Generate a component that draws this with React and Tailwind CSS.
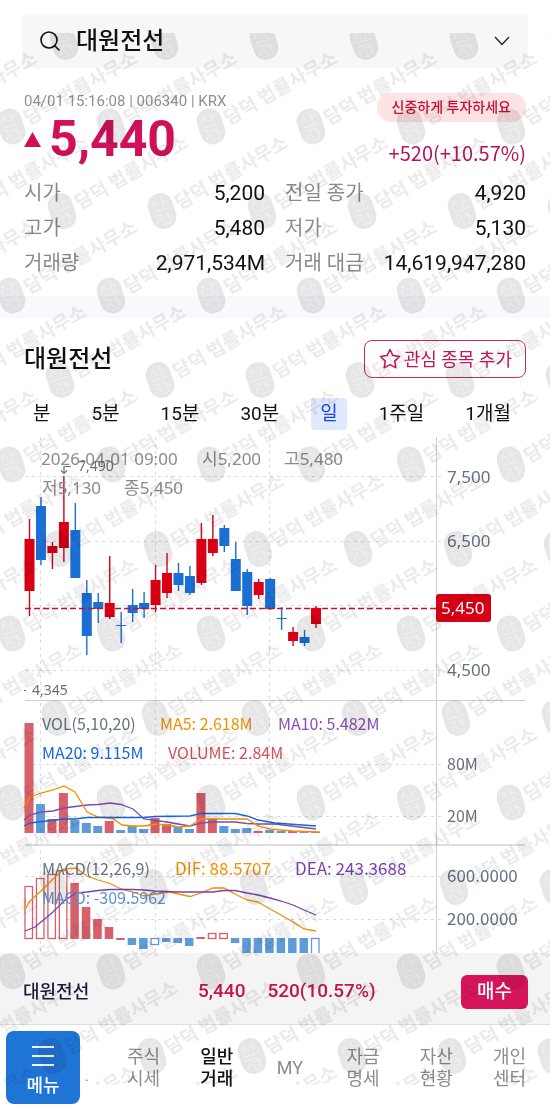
import { FiSearch } from 'react-icons/fi'

const UP = '#d70015'
const DOWN = '#1b6fd3'
const UP_SOFT = '#d7606a'
const DOWN_SOFT = '#5f9bd6'

// [high, open/close top, open/close bottom, low, direction]
const candles = [
  [519, 539, 591, 616, 'up'],
  [497, 506, 560, 565, 'down'],
  [542, 546, 553, 569, 'up'],
  [476, 522, 548, 562, 'up'],
  [503, 530, 578, 578, 'down'],
  [580, 593, 636, 655, 'down'],
  [593, 602, 609, 623, 'down'],
  [556, 603, 617, 619, 'up'],
  [612, 625, 626, 643, 'down'],
  [589, 605, 613, 622, 'down'],
  [592, 603, 609, 618, 'down'],
  [565, 580, 605, 612, 'up'],
  [553, 573, 593, 598, 'up'],
  [563, 573, 585, 591, 'down'],
  [566, 576, 593, 595, 'down'],
  [523, 539, 583, 585, 'up'],
  [515, 539, 553, 556, 'up'],
  [525, 528, 546, 552, 'down'],
  [542, 559, 591, 591, 'down'],
  [569, 572, 606, 615, 'down'],
  [579, 582, 595, 599, 'up'],
  [578, 579, 609, 610, 'down'],
  [607, 618, 619, 630, 'down'],
  [627, 632, 641, 646, 'up'],
  [630, 637, 643, 646, 'down'],
  [606, 608, 624, 628, 'up'],
]

const volumeTops = [
  723, 804, 819, 793, 820, 823, 826, 821, 830, 826, 829, 818, 824, 827, 829, 793, 819, 826, 829, 828,
  831, 830, 831, 831, 831, 832,
]

// [top, bottom, direction, hollow]
const macdBars = [
  [886, 939, 'up', true],
  [878, 939, 'up', true],
  [874, 939, 'up', true],
  [870, 939, 'up', true],
  [883, 939, 'up'],
  [907, 939, 'up'],
  [919, 939, 'up'],
  [927, 939, 'up'],
  [938, 940, 'up'],
  [938, 945, 'down'],
  [938, 949, 'down'],
  [938, 945, 'down', true],
  [938, 942, 'down'],
  [938, 943, 'down'],
  [938, 946, 'down'],
  [937, 939, 'up'],
  [933, 939, 'up', true],
  [933, 939, 'up', true],
  [938, 943, 'down'],
  [938, 955, 'down'],
  [938, 955, 'down'],
  [938, 955, 'down'],
  [938, 955, 'down'],
  [938, 955, 'down'],
  [938, 955, 'down'],
  [938, 957, 'down', true],
]

const lines = [
  {
    color: '#7e4bb0',
    points:
      '24,820 30,815 41,812 53,811 64,808 87,805 98,804.5 110,803 121,804.5 133,809 144,819 167,822 178,824 190,826 201,823 213,822 235,822 247,823.5 258,824 275,824 316,829',
  },
  {
    color: '#f29100',
    points:
      '24,808 30,797 41,793 53,790 64,786 75,792 87,812 98,817 112,818 122,825 133,826 144,826 156,824 167,825 178,827 190,826 201,819 247,819 258,826 270,829 281,830 293,831 320,832',
  },
  {
    color: '#1565d8',
    points:
      '24,826 30,823 64,819 75,819 87,817.5 144,817.5 155,816.5 190,816 201,813.5 235,813.5 247,816 258,820 275,823 316,826',
  },
  {
    color: '#f29100',
    points:
      '24,911 30,901 41,891 53,879 64,869 76,868 87,876 98,880 110,883.5 121,889 133,892 144,896 155,894 170,892 178,894 190,896.5 201,893 213,888 224,888 235,894 247,900 258,902 270,909 281,915 293,922 304,929 316,931',
  },
  {
    color: '#7e3fae',
    points:
      '25,931 35,927 41,922 53,912 64,901 76,893 87,892 98,890.5 110,889.5 133,889.5 144,890 155,891 178,892 213,892 224,890.5 235,890.5 247,893 258,895 270,898 281,901 293,905 304,910 316,915',
  },
]

const stats = [
  ['시가', '5,200', '전일 종가', '4,920'],
  ['고가', '5,480', '저가', '5,130'],
  ['거래량', '2,971,534M', '거래 대금', '14,619,947,280'],
]

const periods = ['분', '5분', '15분', '30분', '일', '1주일', '1개월']

const navItems = [
  ['주식', '시세'],
  ['일반', '거래'],
  ['MY'],
  ['자금', '명세'],
  ['자산', '현황'],
  ['개인', '센터'],
]

function candleX(i) {
  return 29.5 + i * 11.46
}

function Chart() {
  return (
    <svg
      viewBox="0 437 550 516"
      className="block w-full font-['Noto_Sans','Noto_Sans_CJK_KR',sans-serif] text-[17px]"
      role="img"
      aria-label="대원전선 일봉 차트"
    >
      <g stroke="#dcdcdc" strokeDasharray="3 4">
        {[476.5, 541.5, 605.5, 670.5, 764.5, 816.5, 876.5, 919.5].map((y) => (
          <line key={y} x1="25" x2="441" y1={y} y2={y} />
        ))}
        {[40.5, 155.5, 269.5].map((x) => (
          <line key={x} x1={x} x2={x} y1="437" y2="953" />
        ))}
      </g>
      <path d="M436.500 437V953" stroke="#cfcfcf" />
      <path d="M25 700.500H525" stroke="#cfcfcf" />
      <path d="M25 845H525" stroke="#dedede" strokeWidth="2" />

      {candles.map(([high, top, bottom, low, dir], i) => {
        const x = candleX(i)
        const color = dir === 'up' ? UP : DOWN
        return (
          <g key={i} fill={color}>
            <rect x={x - 0.7} y={high} width="1.4" height={low - high} />
            <rect x={x - 5} y={top} width="10" height={bottom - top} />
          </g>
        )
      })}
      <path d="M25 608.500H436" stroke="#c8102e" strokeWidth="1.400" strokeDasharray="6 3" />

      {volumeTops.map((top, i) => (
        <rect
          key={i}
          x={candleX(i) - 5}
          y={top}
          width="9"
          height={833 - top}
          fill={candles[i][4] === 'up' ? UP_SOFT : DOWN_SOFT}
        />
      ))}
      {macdBars.map(([top, bottom, dir, hollow], i) => {
        const color = dir === 'up' ? UP_SOFT : DOWN_SOFT
        return hollow ? (
          <rect
            key={i}
            x={candleX(i) - 4.5}
            y={top + 0.5}
            width="7.500"
            height={bottom - top - 1}
            fill="#fff"
            stroke={color}
            strokeWidth="1.300"
          />
        ) : (
          <rect key={i} x={candleX(i) - 5} y={top} width="8.500" height={bottom - top} fill={color} />
        )
      })}
      {lines.map((line, i) => (
        <polyline key={i} points={line.points} fill="none" stroke={line.color} strokeWidth="1.300" />
      ))}

      <g fill="#8b8b8b">
        <text x="41" y="465">2026-04-01 09:00</text>
        <text x="202" y="465">시5,200</text>
        <text x="284" y="465">고5,480</text>
        <text x="42" y="494">저5,130</text>
        <text x="124" y="494">종5,450</text>
      </g>
      <g fill="#66717f" className="text-[14px]">
        <text x="78" y="471">7,490</text>
        <text x="32" y="695">4,345</text>
      </g>
      <path d="M71 466.500H64V473M61 470.500L64 473.500L67 470.500" fill="none" stroke="#66717f" strokeWidth="1.200" />
      <rect x="24" y="690" width="2" height="1" fill="#66717f" />

      <g fill="#66717f">
        <text x="447" y="483">7,500</text>
        <text x="447" y="547">6,500</text>
        <text x="447" y="676">4,500</text>
      </g>
      <g fill="#66717f" className="font-['Noto_Sans_CJK_KR',sans-serif]">
        <text x="447" y="770" className="text-[16px]">80M</text>
        <text x="447" y="822" className="text-[16px]">20M</text>
        <text x="447" y="882">600.0000</text>
        <text x="447" y="925">200.0000</text>
      </g>
      <rect x="436" y="594" width="55" height="28" rx="3" fill={UP} />
      <text x="441" y="614" fill="#fff">5,450</text>

      <g className="font-['Noto_Sans_CJK_KR',sans-serif] text-[16px]">
        <text x="42" y="730" fill="#66717f">VOL(5,10,20)</text>
        <text x="160" y="730" fill="#f29100">MA5: 2.618M</text>
        <text x="278" y="730" fill="#8a50b5">MA10: 5.482M</text>
        <text x="42" y="759" fill="#1268e0">MA20: 9.115M</text>
        <text x="168" y="759" fill="#d3505c">VOLUME: 2.84M</text>
        <text x="42" y="875" fill="#66717f">MACD(12,26,9)</text>
        <text x="175" y="875" fill="#f29100" className="text-[17px]">DIF: 88.5707</text>
        <text x="295" y="875" fill="#7e3fae" className="text-[17px]">DEA: 243.3688</text>
        <text x="42" y="904" fill="#5f93cf">MACD: -309.5962</text>
      </g>
    </svg>
  )
}

function Watermark() {
  const marks = []
  for (let row = 0; row < 14; row++) {
    for (let col = -1; col < 6; col++) {
      // rows drift slightly to the left on their way down
      const x = (row % 2 ? 11 : 64) + col * 100 - (row % 2 ? 0 : row)
      marks.push({ row, x, y: 9 + row * 84.5 })
    }
  }
  return (
    <div
      className="pointer-events-none absolute inset-x-0 top-[33px] bottom-6 z-20 overflow-hidden mix-blend-multiply"
      aria-hidden="true"
    >
      <svg className="block h-full w-full font-['Noto_Sans_CJK_KR',sans-serif] text-[19px] font-bold">
        {marks.map(({ row, x, y }) => (
          <g key={`${x}-${y}`} transform={`translate(${x} ${y})`}>
            <g transform="rotate(-18)">
              <rect x="-12.500" y="-18" width="25" height="36" rx="12" fill="#e6e6e6" />
              <path
                d="M-4-13L-8-5M-5-11L-1-6M3-14V-3M3-9H8M-8-1H8M-8 3H-2V7M-5 6L-8 12M-4 7L0 12M5 2V14M1 6H5M-3 14H4M1 2L8 9"
                fill="none"
                stroke="#f0f0f0"
              />
            </g>
            {row > 0 && (
              <text transform="rotate(-30)" x="16" y="8" fill="#ebebeb">
                담덕 법률사무소
              </text>
            )}
          </g>
        ))}
      </svg>
    </div>
  )
}

export default function App() {
  return (
    <div className="relative w-full bg-white font-[Roboto,'Noto_Sans_CJK_KR',sans-serif] text-[#111]">
      <header className="px-[22px] pt-[14px]">
        <div className="flex h-[54px] items-center rounded bg-[#f7f7f7] pr-4 pl-4">
          <FiSearch className="h-6 w-6 shrink-0 stroke-[1.600]" />
          <input
            type="text"
            aria-label="종목 검색"
            defaultValue="대원전선"
            className="ml-[14px] min-w-0 flex-1 bg-transparent text-[24px] font-medium outline-none"
          />
          <button type="button" aria-label="종목 목록" className="p-0.5">
            <svg viewBox="0 0 16 10" className="h-[10px] w-4" fill="none" stroke="#222" strokeWidth="1.300">
              <path d="M1 1L8 8.500L15 1" />
            </svg>
          </button>
        </div>
      </header>

      <section className="px-6 pt-[23px]">
        <div className="flex justify-between">
          <div>
            <p className="text-[15px] leading-5 text-[#8f8f8f]">04/01 15:16:08 | 006340 | KRX</p>
            <p className="flex items-center text-[50px] leading-[56px] font-bold text-[#d0115a]">
              <svg viewBox="0 0 17 15" className="mr-2 h-[15px] w-[17px]" fill="currentColor" aria-hidden="true">
                <path d="M8.500 0L17 15H0Z" />
              </svg>
              5,440
            </p>
          </div>
          <div className="flex flex-col items-end pt-[2px]">
            <span className="rounded-full bg-[#fde3e5] px-[15px] text-[14px] leading-[29px] font-medium text-[#c4122f]">
              신중하게 투자하세요
            </span>
            <p className="mt-4 font-['Noto_Sans_CJK_KR',sans-serif] text-[20px] leading-[30px] text-[#b8125a]">
              +520(+10.57%)
            </p>
          </div>
        </div>

        <dl className="mt-2 mb-[15px] text-[20px] leading-[35px]">
          {stats.map(([labelA, valueA, labelB, valueB]) => (
            <div key={labelA} className="grid grid-cols-2 gap-5">
              <div className="flex justify-between">
                <dt className="text-[#8a8a8a]">{labelA}</dt>
                <dd className="text-[21px]">{valueA}</dd>
              </div>
              <div className="flex justify-between">
                <dt className="text-[#8a8a8a]">{labelB}</dt>
                <dd className="text-[21px]">{valueB}</dd>
              </div>
            </div>
          ))}
        </dl>
      </section>

      <div className="h-[22px] bg-[#f7f9fc]" />

      <section>
        <div className="flex items-center justify-between px-6 pt-[22px]">
          <h1 className="text-[24px] leading-[38px] font-medium">대원전선</h1>
          <button
            type="button"
            className="flex h-[38px] items-center rounded-lg border border-[#c92a63] px-[13px] text-[18px] text-[#c4145a]"
          >
            <svg viewBox="0 0 24 24" className="mr-0.5 h-6 w-6" fill="none" stroke="currentColor" strokeWidth="1.500" strokeLinejoin="round">
              <path d="M12 2.500L14.900 8.600L21.500 9.500L16.700 14.100L17.900 20.800L12 17.600L6.100 20.800L7.300 14.100L2.500 9.500L9.100 8.600Z" />
            </svg>
            관심 종목 추가
          </button>
        </div>

        <div className="flex justify-between pt-5 pr-[30px] pb-[7px] pl-6 text-[19px] leading-8">
          {periods.map((period) => (
            <button
              key={period}
              type="button"
              className={period === '일' ? 'rounded bg-[#dfe8fc] px-[9px] text-[#1747e0]' : 'px-[9px]'}
            >
              {period}
            </button>
          ))}
        </div>
        <Chart />
      </section>

      <section className="flex h-[71px] items-center bg-[#f4f4f4] pt-[6px] pr-[22px] pl-[23px] text-[19px] font-medium">
        <span className="w-[175px] text-[18px] text-[#1d1a3d]">대원전선</span>
        <span className="mr-[22px] text-[#c4134f]">5,440</span>
        <span className="text-[#c4134f]">520(10.57%)</span>
        <button type="button" className="ml-auto rounded-md bg-[#d6145c] px-4 leading-[34px] text-white">
          매수
        </button>
      </section>

      <nav className="flex items-center border-t border-[#dedede] pt-[6px] pb-[5px] pl-[6px]">
        <button
          type="button"
          className="flex h-[73px] w-[74px] flex-col items-center rounded-lg bg-[#1f75d6] pt-[15px] text-[18px] leading-6 font-medium text-white"
        >
          <svg viewBox="0 0 22 20" className="mb-1 h-5 w-[22px]" stroke="currentColor" strokeWidth="2" aria-hidden="true">
            <path d="M0 1H22M0 10H22M0 19H22" />
          </svg>
          <span className="pt-1">메뉴</span>
        </button>
        <span className="w-[27px] self-end pb-5 pl-[5px] text-[14px] leading-4 text-[#777]">.</span>
        <div className="flex flex-1 items-center pr-1">
          {navItems.map((words) => (
            <a
              key={words[0]}
              href="#"
              className={`flex flex-1 flex-col items-center text-[18px] leading-[22px] ${
                words[0] === '일반' ? 'font-medium text-[#111]' : 'text-[#8c8c8c]'
              }`}
            >
              {words.map((word) => (
                <span key={word}>{word}</span>
              ))}
            </a>
          ))}
        </div>
      </nav>
      <Watermark />
    </div>
  )
}
